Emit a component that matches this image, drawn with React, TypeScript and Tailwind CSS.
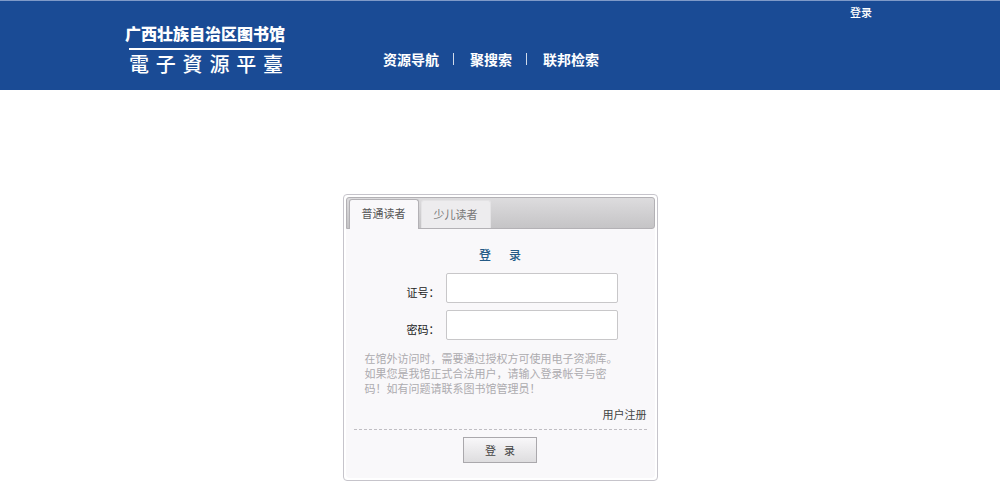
import React, { useState } from "react";
import clsx from "clsx";

const navLinks = ["资源导航", "聚搜索", "联邦检索"];
const tabs = ["普通读者", "少儿读者"];

const Header: React.FC = () => {
  return (
    <header className="border-t border-[#7f9ac8] bg-[#1a4b95] text-white">
      <div className="mx-auto flex h-[89px] max-w-[750px] items-start">
        <a href="#" className="mt-5 block w-[164px]">
          <span className="block whitespace-nowrap text-base leading-6 font-black">
            广西壮族自治区图书馆
          </span>
          <span className="mt-[3px] ml-1 block h-0.5 w-[152px] bg-white" />
          <span className="ml-1 flex w-[154px] justify-between text-xl leading-7 font-medium">
            {[..."電子資源平臺"].map((char) => (
              <span key={char}>{char}</span>
            ))}
          </span>
        </a>

        <nav className="mt-12 ml-20 flex items-center">
          {navLinks.map((label) => (
            <a
              key={label}
              href="#"
              className="group flex items-center text-sm leading-5 font-bold"
            >
              <span className="px-[14px]">{label}</span>
              <span className="mr-0.5 h-3 w-px bg-white/80 group-last:hidden" />
            </a>
          ))}
        </nav>

        <a href="#" className="mt-[3px] mr-[3px] ml-auto text-[11px] leading-4 font-medium">
          登录
        </a>
      </div>
    </header>
  );
};

const LoginBox: React.FC = () => {
  const [active, setActive] = useState(0);

  return (
    <section className="w-[315px] rounded border border-[#c6c4cb] bg-white p-0.5">
      <div className="rounded-sm bg-[#f9f8fa] pb-[15px]">
        {/* tab bar */}
        <div
          role="tablist"
          className="flex h-8 items-end gap-0.5 rounded-t-[3px] rounded-br-[3px] border border-[#b3b1b5] bg-linear-to-b from-[#dddcde] to-[#c5c4c6] pl-0.5"
        >
          {tabs.map((label, i) => (
            <button
              key={label}
              type="button"
              role="tab"
              aria-selected={active === i}
              onClick={() => setActive(i)}
              className={clsx(
                "w-[70px] rounded-t-[3px] border border-b-0 text-[11px]",
                active === i
                  ? "-mb-px h-[30px] border-[#b3b1b5] bg-[#f9f8fa] pb-0.5 text-[#555]"
                  : "h-7 border-[#e4e3e5] bg-[#edecee] text-[#777]"
              )}
            >
              {label}
            </button>
          ))}
        </div>

        <form className="px-2" onSubmit={(e) => e.preventDefault()}>
          <h2 className="mt-[18px] mb-2.5 flex justify-center gap-[18px] text-xs leading-4 font-medium text-[#245a86]">
            <span>登</span>
            <span>录</span>
          </h2>

          <div className="mb-[7px] flex items-center">
            <label
              htmlFor="card"
              className="mt-2 w-[92px] pl-[53px] text-[11px] whitespace-nowrap text-[#222]"
            >
              证号：
            </label>
            <input
              id="card"
              type="text"
              className="h-[30px] w-[172px] rounded-xs border border-[#c8c7c9] bg-white px-2 text-xs"
            />
          </div>
          <div className="flex items-center">
            <label
              htmlFor="password"
              className="mt-2 w-[92px] pl-[53px] text-[11px] whitespace-nowrap text-[#222]"
            >
              密码：
            </label>
            <input
              id="password"
              type="password"
              className="h-[30px] w-[172px] rounded-xs border border-[#c8c7c9] bg-white px-2 text-xs"
            />
          </div>

          <p className="mt-[11px] px-[11px] text-[11px] leading-[15px] text-[#adabaf]">
            在馆外访问时，需要通过授权方可使用电子资源库。
            <br />
            如果您是我馆正式合法用户，请输入登录帐号与密
            <br />
            码！如有问题请联系图书馆管理员！
          </p>

          <div className="mt-2.5 border-b border-dashed border-[#c0bec3] pb-[7px] text-right text-[11px] leading-4">
            <a href="#" className="text-[#444]">
              用户注册
            </a>
          </div>

          <button
            type="submit"
            className="mx-auto mt-[7px] flex h-[26px] w-[74px] items-center justify-center gap-2 border border-[#aaa8ac] bg-linear-to-b from-[#f8f7f9] to-[#dedddf] text-[11px] text-[#444]"
          >
            <span>登</span>
            <span>录</span>
          </button>
        </form>
      </div>
    </section>
  );
};

const App: React.FC = () => {
  return (
    <div lang="zh-CN" className="bg-white font-['Noto_Sans_CJK_SC',sans-serif]">
      <Header />
      <main className="mt-[104px] flex justify-center">
        <LoginBox />
      </main>
    </div>
  );
};

export default App;
